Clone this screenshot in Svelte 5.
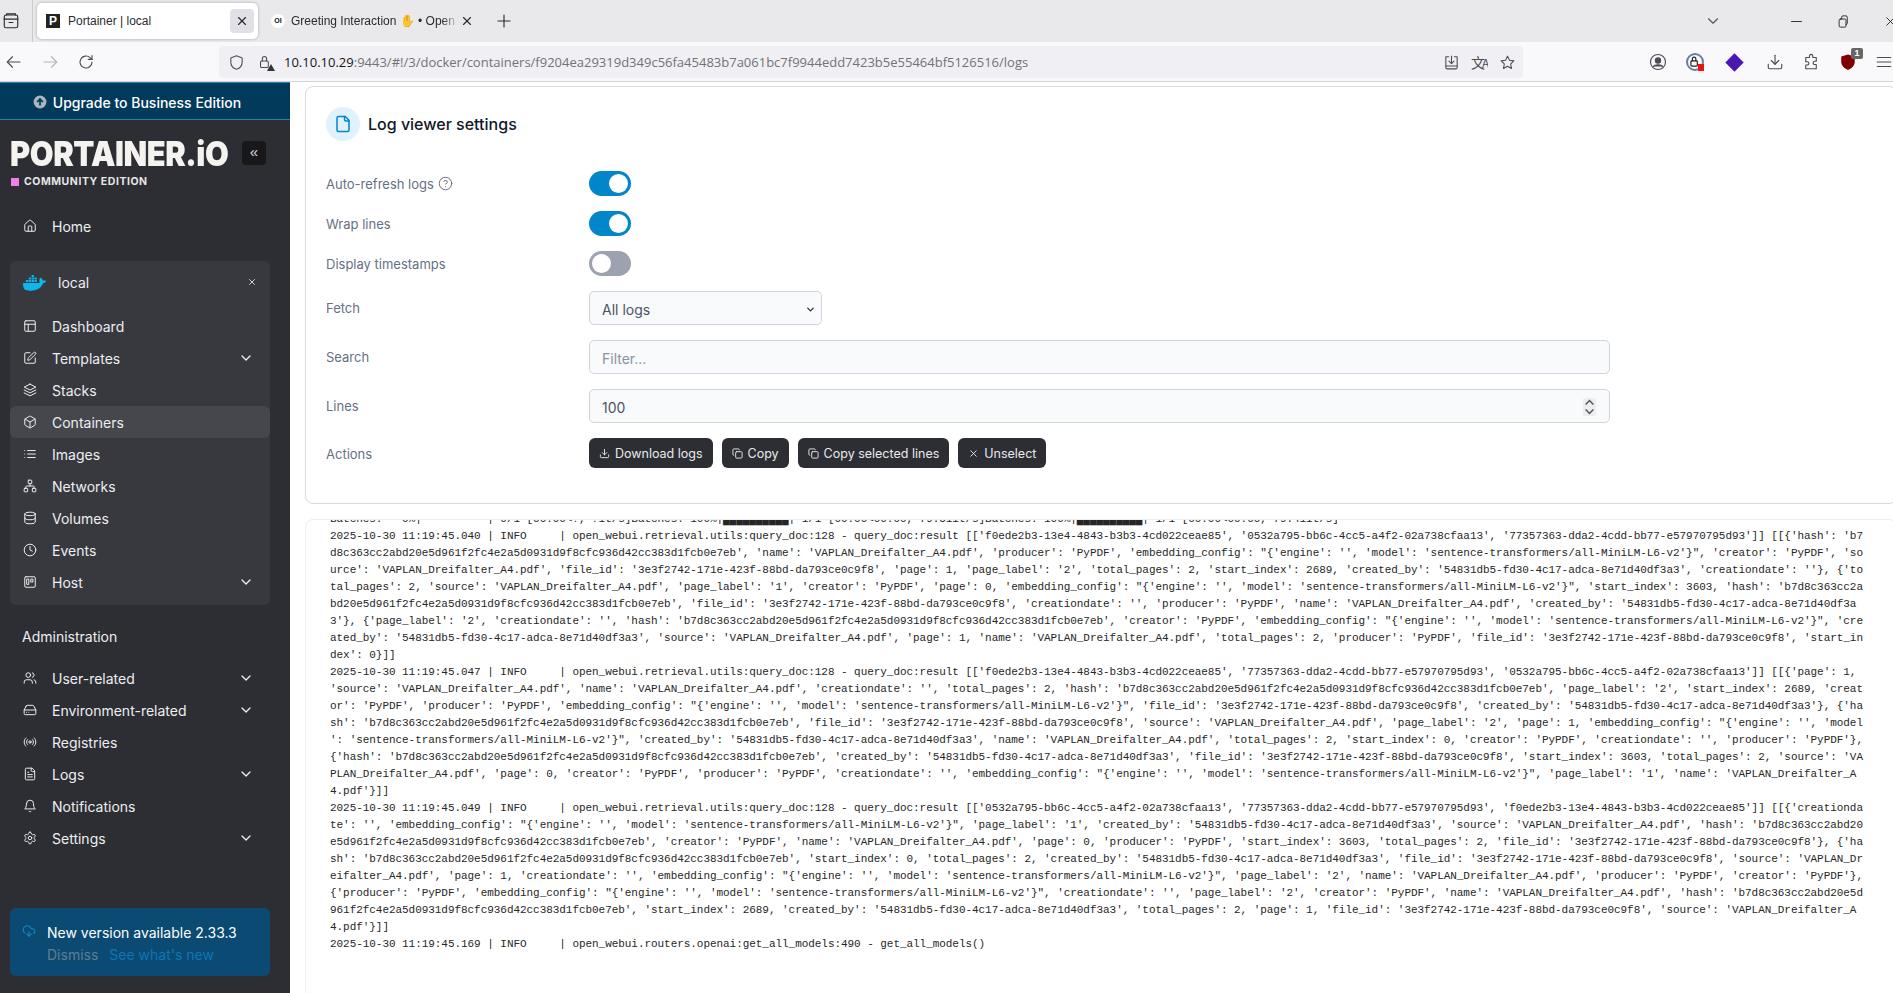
<script>
	const icons = {
		home: '<path d="M15 21v-8a1 1 0 0 0-1-1h-4a1 1 0 0 0-1 1v8"/><path d="M3 10a2 2 0 0 1 .709-1.528l7-5.999a2 2 0 0 1 2.582 0l7 5.999A2 2 0 0 1 21 10v9a2 2 0 0 1-2 2H5a2 2 0 0 1-2-2z"/>',
		layout: '<rect x="3" y="3" width="18" height="18" rx="2"/><path d="M3 9h18"/><path d="M9 21V9"/>',
		edit: '<path d="M12 3H5a2 2 0 0 0-2 2v14a2 2 0 0 0 2 2h14a2 2 0 0 0 2-2v-7"/><path d="M18.375 2.625a1 1 0 0 1 3 3l-9.013 9.014a2 2 0 0 1-.853.505l-2.873.84a.5.5 0 0 1-.62-.62l.84-2.873a2 2 0 0 1 .506-.852z"/>',
		layers: '<path d="M12 2 2 7l10 5 10-5-10-5z"/><path d="m2 17 10 5 10-5"/><path d="m2 12 10 5 10-5"/>',
		box: '<path d="M21 8a2 2 0 0 0-1-1.73l-7-4a2 2 0 0 0-2 0l-7 4A2 2 0 0 0 3 8v8a2 2 0 0 0 1 1.73l7 4a2 2 0 0 0 2 0l7-4A2 2 0 0 0 21 16Z"/><path d="m3.3 7 8.7 5 8.7-5"/><path d="M12 22V12"/>',
		list: '<path d="M8 6h13"/><path d="M8 12h13"/><path d="M8 18h13"/><path d="M3 6h.01"/><path d="M3 12h.01"/><path d="M3 18h.01"/>',
		network: '<rect x="16" y="16" width="6" height="6" rx="1"/><rect x="2" y="16" width="6" height="6" rx="1"/><rect x="9" y="2" width="6" height="6" rx="1"/><path d="M5 16v-3a1 1 0 0 1 1-1h12a1 1 0 0 1 1 1v3"/><path d="M12 12V8"/>',
		database: '<ellipse cx="12" cy="5" rx="9" ry="3"/><path d="M3 5V19A9 3 0 0 0 21 19V5"/><path d="M3 12A9 3 0 0 0 21 12"/>',
		clock: '<circle cx="12" cy="12" r="10"/><path d="M12 6v6l4 2"/>',
		host: '<rect x="3" y="3" width="18" height="18" rx="2"/><rect x="7" y="7" width="3" height="9"/><rect x="14" y="7" width="3" height="5"/>',
		users: '<path d="M16 21v-2a4 4 0 0 0-4-4H6a4 4 0 0 0-4 4v2"/><circle cx="9" cy="7" r="4"/><path d="M22 21v-2a4 4 0 0 0-3-3.87"/><path d="M16 3.13a4 4 0 0 1 0 7.75"/>',
		drive: '<path d="M22 12H2"/><path d="M5.45 5.11 2 12v6a2 2 0 0 0 2 2h16a2 2 0 0 0 2-2v-6l-3.45-6.89A2 2 0 0 0 16.76 4H7.24a2 2 0 0 0-1.79 1.11z"/><path d="M6 16h.01"/><path d="M10 16h.01"/>',
		radio: '<path d="M4.9 19.1C1 15.2 1 8.8 4.9 4.9"/><path d="M7.8 16.2c-2.3-2.3-2.3-6.1 0-8.5"/><circle cx="12" cy="12" r="2"/><path d="M16.2 7.8c2.3 2.3 2.3 6.1 0 8.5"/><path d="M19.1 4.9C23 8.8 23 15.1 19.1 19"/>',
		filetext: '<path d="M15 2H6a2 2 0 0 0-2 2v16a2 2 0 0 0 2 2h12a2 2 0 0 0 2-2V7Z"/><path d="M14 2v4a2 2 0 0 0 2 2h4"/><path d="M10 9H8"/><path d="M16 13H8"/><path d="M16 17H8"/>',
		file: '<path d="M15 2H6a2 2 0 0 0-2 2v16a2 2 0 0 0 2 2h12a2 2 0 0 0 2-2V7Z"/><path d="M14 2v4a2 2 0 0 0 2 2h4"/>',
		bell: '<path d="M6 8a6 6 0 0 1 12 0c0 7 3 9 3 9H3s3-2 3-9"/><path d="M10.3 21a1.94 1.94 0 0 0 3.4 0"/>',
		settings: '<path d="M12.22 2h-.44a2 2 0 0 0-2 2v.18a2 2 0 0 1-1 1.73l-.43.25a2 2 0 0 1-2 0l-.15-.08a2 2 0 0 0-2.73.73l-.22.38a2 2 0 0 0 .73 2.73l.15.1a2 2 0 0 1 1 1.72v.51a2 2 0 0 1-1 1.74l-.15.09a2 2 0 0 0-.73 2.73l.22.38a2 2 0 0 0 2.73.73l.15-.08a2 2 0 0 1 2 0l.43.25a2 2 0 0 1 1 1.73V20a2 2 0 0 0 2 2h.44a2 2 0 0 0 2-2v-.18a2 2 0 0 1 1-1.73l.43-.25a2 2 0 0 1 2 0l.15.08a2 2 0 0 0 2.73-.73l.22-.39a2 2 0 0 0-.73-2.73l-.15-.08a2 2 0 0 1-1-1.74v-.5a2 2 0 0 1 1-1.74l.15-.09a2 2 0 0 0 .73-2.73l-.22-.38a2 2 0 0 0-2.73-.73l-.15.08a2 2 0 0 1-2 0l-.43-.25a2 2 0 0 1-1-1.73V4a2 2 0 0 0-2-2z"/><circle cx="12" cy="12" r="3"/>',
		chevron: '<path d="m6 9 6 6 6-6"/>',
		x: '<path d="M18 6 6 18"/><path d="m6 6 12 12"/>',
		copy: '<rect x="8" y="8" width="14" height="14" rx="2"/><path d="M4 16c-1.1 0-2-.9-2-2V4c0-1.1.9-2 2-2h10c1.1 0 2 .9 2 2"/>',
		download: '<path d="M21 15v4a2 2 0 0 1-2 2H5a2 2 0 0 1-2-2v-4"/><path d="m7 10 5 5 5-5"/><path d="M12 15V3"/>',
		help: '<circle cx="12" cy="12" r="10"/><path d="M9.09 9a3 3 0 0 1 5.83 1c0 2-3 3-3 3"/><path d="M12 17h.01"/>',
		cloud: '<path d="M12 13v8l-4-4"/><path d="m12 21 4-4"/><path d="M4.393 15.269A7 7 0 1 1 15.71 8h1.79a4.5 4.5 0 0 1 2.436 8.284"/>',
		back: '<path d="M20 12H4"/><path d="m10 5-7 7 7 7"/>',
		forward: '<path d="M4 12h16"/><path d="m14 5 7 7-7 7"/>',
		reload: '<path d="M20 12a8 8 0 1 1-2.6-5.9L20 8.5"/><path d="M20 3.5v5h-5"/>',
		shield: '<path d="M12 2.5 4 5.5v6c0 5 3.4 8.5 8 10 4.6-1.5 8-5 8-10v-6z"/>',
		lock: '<rect x="5" y="10" width="11" height="9" rx="1.5"/><path d="M7.5 10V6.5a3 3 0 0 1 6 0V10"/>',
		pocket: '<path d="M4 4h4M16 4h4v15a2 2 0 0 1-2 2H6a2 2 0 0 1-2-2V4"/><path d="M12 3v10"/><path d="m8.5 10 3.5 3.5 3.5-3.5"/><path d="M4 17h16"/>',
		star: '<path d="m12 3 2.8 5.8 6.2.9-4.5 4.4 1.1 6.3L12 17.4l-5.6 3 1.1-6.3L3 9.700l6.200-.9z"/>',
		account: '<circle cx="12" cy="12" r="10"/><circle cx="12" cy="10" r="3.500" fill="currentColor"/><path d="M6 18c1.500-3 10.500-3 12 0" fill="currentColor"/>',
		puzzle: '<path d="M10 4a2.200 2.200 0 0 1 4.400 0v2H19v5h-2a2.200 2.200 0 0 0 0 4.400h2V21H5v-5h2a2.200 2.200 0 0 0 0-4.400H5V6h5z"/>',
		menu: '<path d="M3 6h18"/><path d="M3 12h18"/><path d="M3 18h18"/>',
		tabs: '<rect x="3" y="4" width="18" height="17" rx="2.500"/><path d="M3 9.500h18"/><path d="M6 4V2.500h12V4"/><path d="M9.500 14h5"/>',
		plus: '<path d="M12 4v16"/><path d="M4 12h16"/>',
		restore: '<rect x="5" y="8" width="11" height="13" rx="2"/><path d="M9 8V5a2 2 0 0 1 2-2h5a2 2 0 0 1 2 2v10a2 2 0 0 1-2 2"/>',
		minimize: '<path d="M4 12h16"/>'
	};

	const localNav = [
		{ label: 'Dashboard', icon: 'layout' },
		{ label: 'Templates', icon: 'edit', more: true },
		{ label: 'Stacks', icon: 'layers' },
		{ label: 'Containers', icon: 'box', active: true },
		{ label: 'Images', icon: 'list' },
		{ label: 'Networks', icon: 'network' },
		{ label: 'Volumes', icon: 'database' },
		{ label: 'Events', icon: 'clock' },
		{ label: 'Host', icon: 'host', more: true }
	];

	const adminNav = [
		{ label: 'User-related', icon: 'users', more: true },
		{ label: 'Environment-related', icon: 'drive', more: true },
		{ label: 'Registries', icon: 'radio' },
		{ label: 'Logs', icon: 'filetext', more: true },
		{ label: 'Notifications', icon: 'bell' },
		{ label: 'Settings', icon: 'settings', more: true }
	];

	const block = '██████████';
	const logLines = [
		`Batches:   0%|          | 0/1 [00:00<?, ?it/s]Batches: 100%|${block}| 1/1 [00:00<00:00, 79.51it/s]Batches: 100%|${block}| 1/1 [00:00<00:00, 79.41it/s]`,
		`2025-10-30 11:19:45.040 | INFO     | open_webui.retrieval.utils:query_doc:128 - query_doc:result [['f0ede2b3-13e4-4843-b3b3-4cd022ceae85', '0532a795-bb6c-4cc5-a4f2-02a738cfaa13', '77357363-dda2-4cdd-bb77-e57970795d93']] [[{'hash': 'b7`,
		`d8c363cc2abd20e5d961f2fc4e2a5d0931d9f8cfc936d42cc383d1fcb0e7eb', 'name': 'VAPLAN_Dreifalter_A4.pdf', 'producer': 'PyPDF', 'embedding_config': "{'engine': '', 'model': 'sentence-transformers/all-MiniLM-L6-v2'}", 'creator': 'PyPDF', 'so`,
		`urce': 'VAPLAN_Dreifalter_A4.pdf', 'file_id': '3e3f2742-171e-423f-88bd-da793ce0c9f8', 'page': 1, 'page_label': '2', 'total_pages': 2, 'start_index': 2689, 'created_by': '54831db5-fd30-4c17-adca-8e71d40df3a3', 'creationdate': ''}, {'to`,
		`tal_pages': 2, 'source': 'VAPLAN_Dreifalter_A4.pdf', 'page_label': '1', 'creator': 'PyPDF', 'page': 0, 'embedding_config': "{'engine': '', 'model': 'sentence-transformers/all-MiniLM-L6-v2'}", 'start_index': 3603, 'hash': 'b7d8c363cc2a`,
		`bd20e5d961f2fc4e2a5d0931d9f8cfc936d42cc383d1fcb0e7eb', 'file_id': '3e3f2742-171e-423f-88bd-da793ce0c9f8', 'creationdate': '', 'producer': 'PyPDF', 'name': 'VAPLAN_Dreifalter_A4.pdf', 'created_by': '54831db5-fd30-4c17-adca-8e71d40df3a`,
		`3'}, {'page_label': '2', 'creationdate': '', 'hash': 'b7d8c363cc2abd20e5d961f2fc4e2a5d0931d9f8cfc936d42cc383d1fcb0e7eb', 'creator': 'PyPDF', 'embedding_config': "{'engine': '', 'model': 'sentence-transformers/all-MiniLM-L6-v2'}", 'cre`,
		`ated_by': '54831db5-fd30-4c17-adca-8e71d40df3a3', 'source': 'VAPLAN_Dreifalter_A4.pdf', 'page': 1, 'name': 'VAPLAN_Dreifalter_A4.pdf', 'total_pages': 2, 'producer': 'PyPDF', 'file_id': '3e3f2742-171e-423f-88bd-da793ce0c9f8', 'start_in`,
		`dex': 0}]]`,
		`2025-10-30 11:19:45.047 | INFO     | open_webui.retrieval.utils:query_doc:128 - query_doc:result [['f0ede2b3-13e4-4843-b3b3-4cd022ceae85', '77357363-dda2-4cdd-bb77-e57970795d93', '0532a795-bb6c-4cc5-a4f2-02a738cfaa13']] [[{'page': 1,`,
		`'source': 'VAPLAN_Dreifalter_A4.pdf', 'name': 'VAPLAN_Dreifalter_A4.pdf', 'creationdate': '', 'total_pages': 2, 'hash': 'b7d8c363cc2abd20e5d961f2fc4e2a5d0931d9f8cfc936d42cc383d1fcb0e7eb', 'page_label': '2', 'start_index': 2689, 'creat`,
		`or': 'PyPDF', 'producer': 'PyPDF', 'embedding_config': "{'engine': '', 'model': 'sentence-transformers/all-MiniLM-L6-v2'}", 'file_id': '3e3f2742-171e-423f-88bd-da793ce0c9f8', 'created_by': '54831db5-fd30-4c17-adca-8e71d40df3a3'}, {'ha`,
		`sh': 'b7d8c363cc2abd20e5d961f2fc4e2a5d0931d9f8cfc936d42cc383d1fcb0e7eb', 'file_id': '3e3f2742-171e-423f-88bd-da793ce0c9f8', 'source': 'VAPLAN_Dreifalter_A4.pdf', 'page_label': '2', 'page': 1, 'embedding_config': "{'engine': '', 'model`,
		`': 'sentence-transformers/all-MiniLM-L6-v2'}", 'created_by': '54831db5-fd30-4c17-adca-8e71d40df3a3', 'name': 'VAPLAN_Dreifalter_A4.pdf', 'total_pages': 2, 'start_index': 0, 'creator': 'PyPDF', 'creationdate': '', 'producer': 'PyPDF'},`,
		`{'hash': 'b7d8c363cc2abd20e5d961f2fc4e2a5d0931d9f8cfc936d42cc383d1fcb0e7eb', 'created_by': '54831db5-fd30-4c17-adca-8e71d40df3a3', 'file_id': '3e3f2742-171e-423f-88bd-da793ce0c9f8', 'start_index': 3603, 'total_pages': 2, 'source': 'VA`,
		`PLAN_Dreifalter_A4.pdf', 'page': 0, 'creator': 'PyPDF', 'producer': 'PyPDF', 'creationdate': '', 'embedding_config': "{'engine': '', 'model': 'sentence-transformers/all-MiniLM-L6-v2'}", 'page_label': '1', 'name': 'VAPLAN_Dreifalter_A`,
		`4.pdf'}]]`,
		`2025-10-30 11:19:45.049 | INFO     | open_webui.retrieval.utils:query_doc:128 - query_doc:result [['0532a795-bb6c-4cc5-a4f2-02a738cfaa13', '77357363-dda2-4cdd-bb77-e57970795d93', 'f0ede2b3-13e4-4843-b3b3-4cd022ceae85']] [[{'creationda`,
		`te': '', 'embedding_config': "{'engine': '', 'model': 'sentence-transformers/all-MiniLM-L6-v2'}", 'page_label': '1', 'created_by': '54831db5-fd30-4c17-adca-8e71d40df3a3', 'source': 'VAPLAN_Dreifalter_A4.pdf', 'hash': 'b7d8c363cc2abd20`,
		`e5d961f2fc4e2a5d0931d9f8cfc936d42cc383d1fcb0e7eb', 'creator': 'PyPDF', 'name': 'VAPLAN_Dreifalter_A4.pdf', 'page': 0, 'producer': 'PyPDF', 'start_index': 3603, 'total_pages': 2, 'file_id': '3e3f2742-171e-423f-88bd-da793ce0c9f8'}, {'ha`,
		`sh': 'b7d8c363cc2abd20e5d961f2fc4e2a5d0931d9f8cfc936d42cc383d1fcb0e7eb', 'start_index': 0, 'total_pages': 2, 'created_by': '54831db5-fd30-4c17-adca-8e71d40df3a3', 'file_id': '3e3f2742-171e-423f-88bd-da793ce0c9f8', 'source': 'VAPLAN_Dr`,
		`eifalter_A4.pdf', 'page': 1, 'creationdate': '', 'embedding_config': "{'engine': '', 'model': 'sentence-transformers/all-MiniLM-L6-v2'}", 'page_label': '2', 'name': 'VAPLAN_Dreifalter_A4.pdf', 'producer': 'PyPDF', 'creator': 'PyPDF'},`,
		`{'producer': 'PyPDF', 'embedding_config': "{'engine': '', 'model': 'sentence-transformers/all-MiniLM-L6-v2'}", 'creationdate': '', 'page_label': '2', 'creator': 'PyPDF', 'name': 'VAPLAN_Dreifalter_A4.pdf', 'hash': 'b7d8c363cc2abd20e5d`,
		`961f2fc4e2a5d0931d9f8cfc936d42cc383d1fcb0e7eb', 'start_index': 2689, 'created_by': '54831db5-fd30-4c17-adca-8e71d40df3a3', 'total_pages': 2, 'page': 1, 'file_id': '3e3f2742-171e-423f-88bd-da793ce0c9f8', 'source': 'VAPLAN_Dreifalter_A`,
		`4.pdf'}]]`,
		`2025-10-30 11:19:45.169 | INFO     | open_webui.routers.openai:get_all_models:490 - get_all_models()`
	];
</script>

{#snippet icon(name, cls = '')}
	<svg class="icon {cls}" viewBox="0 0 24 24" fill="none" stroke="currentColor" stroke-width="2" stroke-linecap="round" stroke-linejoin="round" aria-hidden="true">{@html icons[name]}</svg>
{/snippet}

{#snippet navRow(item)}
	<div class="nav-row" class:active={item.active}>
		{@render icon(item.icon, 'nav-icon')}
		<span class="nav-label">{item.label}</span>
		{#if item.more}
			{@render icon('chevron', 'nav-chevron')}
		{/if}
	</div>
{/snippet}

<div class="window">
	<div class="tabstrip">
		<div class="tab-list-btn">{@render icon('tabs', 'chrome-icon')}</div>
		<div class="tab-sep"></div>
		<div class="tab active-tab">
			<span class="favicon">P</span>
			<span class="tab-title">Portainer | local</span>
			<span class="tab-close">{@render icon('x', 'tab-x')}</span>
		</div>
		<div class="tab other-tab">
			<span class="oi">OI</span>
			<span class="tab-title fade">Greeting Interaction ✋ • Open WebUI</span>
			{@render icon('x', 'tab-x')}
		</div>
		<div class="new-tab">{@render icon('plus', 'chrome-icon')}</div>
		<div class="spacer"></div>
		{@render icon('chevron', 'all-tabs')}
		<div class="win-controls">
			{@render icon('minimize', 'win-icon')}
			{@render icon('restore', 'win-icon')}
			{@render icon('x', 'win-icon')}
		</div>
	</div>

	<div class="navbar">
		<div class="nav-buttons">
			{@render icon('back', 'chrome-icon')}
			<span class="dim">{@render icon('forward', 'chrome-icon')}</span>
			{@render icon('reload', 'chrome-icon')}
		</div>
		<div class="urlbar">
			{@render icon('shield', 'url-icon')}
			<span class="lock">
				{@render icon('lock', 'url-icon')}
				<span class="warn"></span>
			</span>
			<span class="url"><b>10.10.10.29</b>:9443/#!/3/docker/containers/f9204ea29319d349c56fa45483b7a061bc7f9944edd7423b5e55464bf5126516/logs</span>
			<span class="spacer"></span>
			<span class="url-actions">
				{@render icon('pocket', 'url-icon')}
				<span class="translate">文<i>A</i></span>
				{@render icon('star', 'url-icon')}
			</span>
		</div>
		<div class="toolbar">
			{@render icon('account', 'chrome-icon')}
			<span class="ext-lock">
				{@render icon('lock', 'ext-lock-icon')}
				<span class="ext-badge"></span>
			</span>
			<span class="diamond"></span>
			{@render icon('download', 'chrome-icon')}
			{@render icon('puzzle', 'chrome-icon')}
			<span class="ublock">
				<svg viewBox="0 0 24 24" class="icon chrome-icon"><path d="M12 2 3 4.500v7c0 5 4 9 9 11 5-2 9-6 9-11v-7z" fill="#800000" /></svg>
				<span class="ublock-count">1</span>
			</span>
			{@render icon('menu', 'chrome-icon')}
		</div>
	</div>

	<div class="page">
		<aside class="sidebar">
			<div class="upgrade">
				<svg class="upgrade-icon" viewBox="0 0 24 24"><circle cx="12" cy="12" r="11" fill="#a9b6c0" /><path d="M12 18V7M7 12l5-5 5 5" fill="none" stroke="#023a5c" stroke-width="3" /></svg>
				Upgrade to Business Edition
			</div>
			<div class="brand">
				<div class="brand-text">
					<div class="logo">PORTAINER.iO</div>
					<div class="edition"><span class="pink"></span>COMMUNITY EDITION</div>
				</div>
				<div class="collapse">«</div>
			</div>

			<div class="nav-group">
				{@render navRow({ label: 'Home', icon: 'home' })}
			</div>

			<div class="env">
				<div class="env-head">
					<svg class="whale" viewBox="0 0 24 17" aria-hidden="true">
						<path fill="#0db7ed" d="M23.700 6.800c-.6-.4-2-.6-3.100-.3-.1-1.100-.8-2-1.900-2.800l-.6-.4-.4.600c-.5.800-.7 2-.6 3 .1.400.2 1 .6 1.500-.4.200-1.100.5-2 .5H.2c-.3 1.300-.3 5.200 2.200 7.400C4 17 6.300 17 8.800 17c5.600 0 10.200-2.500 12.300-7.900 1.400.1 2.500-.7 3-1.800z" />
						<path fill="#0db7ed" d="M3 6h2.400v1.900H3zM6 6h2.400v1.900H6zM9 6h2.400v1.900H9zM12 6h2.400v1.900H12zM6 3.400h2.400v1.900H6zM9 3.400h2.400v1.900H9zM12 3.400h2.400v1.900H12zM9 .8h2.400v1.900H9z" />
					</svg>
					<span class="env-name">local</span>
					{@render icon('x', 'env-close')}
				</div>
				{#each localNav as item (item.label)}
					{@render navRow(item)}
				{/each}
			</div>

			<div class="section-title">Administration</div>
			<div class="nav-group">
				{#each adminNav as item (item.label)}
					{@render navRow(item)}
				{/each}
			</div>

			<div class="update">
				{@render icon('cloud', 'update-icon')}
				<div>
					<div class="update-title">New version available 2.33.3</div>
					<div class="update-links"><span class="dismiss">Dismiss</span><span class="whats-new">See what's new</span></div>
				</div>
			</div>
		</aside>

		<main class="main">
			<section class="card settings">
				<header class="card-head">
					<span class="head-icon">{@render icon('file', 'head-svg')}</span>
					<h2>Log viewer settings</h2>
				</header>

				<div class="form">
					<div class="label">Auto-refresh logs {@render icon('help', 'help-icon')}</div>
					<div class="toggle on"><span></span></div>

					<div class="label">Wrap lines</div>
					<div class="toggle on"><span></span></div>

					<div class="label">Display timestamps</div>
					<div class="toggle"><span></span></div>

					<div class="label">Fetch</div>
					<div class="control select">All logs {@render icon('chevron', 'select-chevron')}</div>

					<div class="label">Search</div>
					<div class="control placeholder">Filter...</div>

					<div class="label">Lines</div>
					<div class="control number">
						100
						<span class="spinner">
							<svg viewBox="0 0 10 14"><path d="M2 5l3-3 3 3M2 9l3 3 3-3" fill="none" stroke="#555" stroke-width="1.200" /></svg>
						</span>
					</div>

					<div class="label actions-label">Actions</div>
					<div class="actions">
						<button class="btn">{@render icon('download', 'btn-icon')}Download logs</button>
						<button class="btn">{@render icon('copy', 'btn-icon')}Copy</button>
						<button class="btn">{@render icon('copy', 'btn-icon')}Copy selected lines</button>
						<button class="btn">{@render icon('x', 'btn-icon')}Unselect</button>
					</div>
				</div>
			</section>

			<section class="card log">
				<div class="log-scroll">
					{#each logLines as line, i (i)}
						<div class="log-line">{line}</div>
					{/each}
				</div>
			</section>
		</main>
	</div>
</div>

<style>
	:global(body) {
		margin: 0;
		overflow: hidden;
		background: #fff;
	}

	.window {
		width: 1893px;
		height: 993px;
		display: flex;
		flex-direction: column;
		overflow: hidden;
		font-family: Inter, 'Noto Sans', sans-serif;
	}

	.icon {
		display: block;
		flex: none;
		width: 16px;
		height: 16px;
	}

	.spacer {
		flex: 1;
	}

	/* browser chrome */
	.tabstrip {
		height: 42px;
		display: flex;
		align-items: center;
		background: #e9e9ec;
		color: #2b2a33;
		font-family: 'Liberation Sans', sans-serif;
		font-size: 12px;
		flex: none;
	}

	.tab-list-btn {
		width: 32px;
		padding-left: 2px;
		box-sizing: border-box;
	}

	.tab-sep {
		width: 1px;
		height: 42px;
		background: #c9c9ce;
	}

	.tab {
		height: 36px;
		display: flex;
		align-items: center;
		box-sizing: border-box;
		white-space: nowrap;
	}

	.active-tab {
		width: 221px;
		margin-left: 4px;
		padding: 0 4px 0 9px;
		background: #fff;
		border-radius: 5px;
		box-shadow: 0 0 3px rgba(0, 0, 0, 0.3);
	}

	.favicon {
		width: 14px;
		height: 14px;
		background: #222;
		color: #fff;
		font: 700 12px 'Liberation Sans', sans-serif;
		line-height: 14px;
		text-align: center;
		margin-right: 8px;
	}

	.tab-title {
		flex: 1;
		overflow: hidden;
	}

	.tab-close {
		width: 24px;
		height: 24px;
		background: #e0e0e6;
		border-radius: 4px;
		display: flex;
		align-items: center;
		justify-content: center;
	}

	:global(.tab-x) {
		width: 14px !important;
		height: 14px !important;
	}

	.other-tab {
		width: 232px;
		padding: 0 16px 0 13px;
	}

	.oi {
		width: 14px;
		height: 14px;
		border-radius: 50%;
		background: #fff;
		color: #111;
		font: 700 7px/14px 'Liberation Sans', sans-serif;
		text-align: center;
		margin-right: 6px;
	}

	.fade {
		mask-image: linear-gradient(to right, #000 90%, transparent);
		margin-right: 1px;
	}

	.new-tab {
		margin-left: 5px;
	}

	:global(.chrome-icon) {
		width: 18px !important;
		height: 18px !important;
		stroke-width: 1.500;
	}

	:global(.all-tabs) {
		width: 18px !important;
		height: 18px !important;
		stroke-width: 1.500;
		color: #555;
		margin-right: 67px;
	}

	.win-controls {
		display: flex;
		gap: 32px;
		margin-right: -5px;
	}

	:global(.win-icon) {
		width: 15px !important;
		height: 15px !important;
		stroke-width: 1.500;
	}

	.navbar {
		height: 38px;
		padding-top: 1px;
		flex: none;
		display: flex;
		align-items: center;
		background: #f9f9fb;
		border-bottom: 1px solid #d4d4d8;
		color: #4c4b55;
	}

	.nav-buttons {
		width: 219px;
		flex: none;
		padding-left: 5px;
		box-sizing: border-box;
		display: flex;
		gap: 18px;
	}

	.dim {
		opacity: 0.4;
	}

	.urlbar {
		width: 1304px;
		flex: none;
		height: 32px;
		display: flex;
		align-items: center;
		background: #f0f0f4;
		border-radius: 4px;
		padding-left: 9px;
		box-sizing: border-box;
	}

	:global(.url-icon) {
		width: 17px !important;
		height: 17px !important;
		stroke-width: 1.500;
	}

	.lock {
		position: relative;
		margin-left: 12px;
	}

	.warn {
		position: absolute;
		right: -1px;
		bottom: 0;
		width: 0;
		height: 0;
		border-left: 4px solid transparent;
		border-right: 4px solid transparent;
		border-bottom: 7px solid #333;
	}

	.url {
		margin-left: 10px;
		font-family: 'Open Sans', sans-serif;
		font-size: 13px;
		color: #737278;
		white-space: nowrap;
	}

	.url b {
		font-weight: 400;
		color: #15141a;
	}

	.url-actions {
		display: flex;
		align-items: center;
		gap: 11px;
		padding-right: 7px;
	}

	.translate {
		width: 17px;
		font: 14px 'Noto Sans CJK SC', sans-serif;
		letter-spacing: -3px;
		white-space: nowrap;
		overflow: hidden;
	}

	.translate i {
		font-style: normal;
		font-size: 12px;
	}

	.toolbar {
		flex: none;
		display: flex;
		align-items: center;
		gap: 18.5px;
		padding-left: 126px;
	}

	.ext-lock {
		position: relative;
		width: 18px;
		height: 18px;
		border: 2px solid #6b7fa0;
		border-radius: 50%;
		box-sizing: border-box;
		color: #222;
	}

	:global(.ext-lock-icon) {
		width: 14px !important;
		height: 14px !important;
	}

	.ext-badge {
		position: absolute;
		right: -2px;
		bottom: -2px;
		width: 6px;
		height: 7px;
		background: #e11;
	}

	.diamond {
		width: 13px;
		height: 13px;
		background: #4a18b0;
		transform: rotate(45deg);
		margin: 0 6px;
	}

	.ublock {
		position: relative;
	}

	.ublock-count {
		position: absolute;
		top: -5px;
		right: -6px;
		background: #666;
		color: #fff;
		font: 700 9px/11px 'Liberation Sans', sans-serif;
		padding: 0 3px;
		border-radius: 2px;
	}

	/* page */
	.page {
		flex: 1;
		min-height: 0;
		display: flex;
	}

	.sidebar {
		width: 290px;
		flex: none;
		display: flex;
		flex-direction: column;
		background: #2d2e33;
		color: #eceef1;
		font-size: 14px;
	}

	.upgrade {
		height: 38px;
		box-sizing: border-box;
		display: flex;
		align-items: center;
		justify-content: center;
		gap: 6px;
		padding: 2px 16px 0 0;
		background: #023a5c;
		border-top: 1px solid #2a7fa8;
		border-bottom: 1px solid #2a7fa8;
		color: #fff;
		font-weight: 500;
	}

	.upgrade-icon {
		width: 14px;
		height: 14px;
	}

	.brand {
		height: 90px;
		padding: 21px 24px 0 10px;
		box-sizing: border-box;
		display: flex;
		justify-content: space-between;
	}

	.logo {
		width: 220px;
		height: 26px;
		font: 900 34px/26px Inter, sans-serif;
		color: #f5f3f0;
		white-space: nowrap;
		transform: scaleX(0.905);
		transform-origin: left center;
		letter-spacing: -0.5px;
	}

	.edition {
		display: flex;
		align-items: center;
		margin: 8px 0 0 1px;
		font-size: 10.5px;
		font-weight: 700;
		letter-spacing: 0.55px;
		color: #e6e6e6;
	}

	.pink {
		width: 8px;
		height: 8px;
		background: #f17ee8;
		margin-right: 5px;
	}

	.collapse {
		width: 24px;
		height: 24px;
		background: #18181b;
		border-radius: 4px;
		text-align: center;
		font: 15px/21px 'Liberation Sans', sans-serif;
		color: #d8d8d8;
	}

	.nav-group {
		padding: 0 20px 0 10px;
	}

	.nav-row {
		height: 32px;
		display: flex;
		align-items: center;
		padding: 0 16px 0 13px;
		border-radius: 6px;
	}

	.nav-row.active {
		background: #46474d;
	}

	:global(.nav-icon) {
		width: 14px !important;
		height: 14px !important;
		margin-right: 15px;
		stroke-width: 1.700;
	}

	.nav-label {
		flex: 1;
	}

	:global(.nav-chevron) {
		width: 16px !important;
		height: 16px !important;
	}

	.env {
		margin: 19px 20px 0 10px;
		background: #38393e;
		border-radius: 6px;
		height: 344px;
		box-sizing: border-box;
	}

	.env-head {
		height: 49px;
		padding: 0 13px 7px;
		box-sizing: border-box;
		display: flex;
		align-items: center;
	}

	.whale {
		width: 23px;
		height: 17px;
		margin-right: 12px;
	}

	.env-name {
		flex: 1;
	}

	:global(.env-close) {
		width: 10px !important;
		height: 10px !important;
	}

	.section-title {
		margin: 23px 0 0 22px;
		height: 34px;
	}

	.update {
		margin: auto 20px 17px 10px;
		height: 68px;
		box-sizing: border-box;
		padding: 16px 12px;
		display: flex;
		gap: 11px;
		background: #0a4a73;
		border-radius: 6px;
		color: #fff;
	}

	:global(.update-icon) {
		width: 14px !important;
		height: 14px !important;
		color: #1b86c4;
		stroke-width: 1.800;
	}

	.update-title {
		line-height: 18px;
	}

	.update-links {
		margin-top: 5px;
		display: flex;
		gap: 11px;
		line-height: 16px;
	}

	.dismiss {
		color: #5f7d93;
	}

	.whats-new {
		color: #0f76b4;
	}

	/* main */
	.main {
		flex: 1;
		min-width: 0;
		display: flex;
		flex-direction: column;
		gap: 15px;
		padding: 4px 0 0 15px;
		margin-right: -4px;
		background: #fff;
	}

	.card {
		border: 1px solid #d8dadf;
		border-radius: 8px;
		background: #fff;
	}

	.settings {
		height: 418px;
		box-sizing: border-box;
		padding: 20px;
		flex: none;
	}

	.card-head {
		display: flex;
		align-items: center;
		gap: 8px;
		height: 34px;
		margin-bottom: 30px;
	}

	.head-icon {
		width: 34px;
		height: 34px;
		border-radius: 50%;
		background: #e0f2fe;
		display: flex;
		align-items: center;
		justify-content: center;
		color: #0086c9;
	}

	.card-head h2 {
		margin: 0;
		font-size: 16px;
		font-weight: 500;
		color: #101828;
	}

	:global(.head-svg) {
		width: 18px !important;
		height: 18px !important;
	}

	.form {
		display: grid;
		grid-template-columns: 263px 1021px;
		row-gap: 15px;
		align-items: center;
		font-size: 13px;
	}

	.label {
		display: flex;
		align-items: center;
		gap: 4px;
		color: #667085;
	}

	.actions-label {
		padding-top: 2px;
	}

	:global(.help-icon) {
		width: 15px !important;
		height: 15px !important;
		stroke-width: 1.500;
		color: #5f6673;
	}

	.toggle {
		width: 42px;
		height: 25px;
		padding: 3px;
		box-sizing: border-box;
		border-radius: 13px;
		background: #9ca3af;
		display: flex;
	}

	.toggle.on {
		background: #0086c9;
		justify-content: flex-end;
	}

	.toggle span {
		width: 19px;
		height: 19px;
		border-radius: 50%;
		background: #fff;
	}

	.control {
		height: 34px;
		box-sizing: border-box;
		padding: 2px 12px 0;
		display: flex;
		align-items: center;
		justify-content: space-between;
		background: #f9fafb;
		border: 1px solid #d0d5dd;
		border-radius: 5px;
		color: #4b5563;
		font-size: 14px;
	}

	.select {
		width: 233px;
	}

	:global(.select-chevron) {
		width: 11px !important;
		height: 11px !important;
		margin-right: -7px;
		stroke-width: 3;
		color: #333;
	}

	.placeholder {
		color: #8b92a0;
	}

	.spinner svg {
		display: block;
		width: 13px;
		height: 18px;
		background: #eceef1;
		border-radius: 2px;
	}

	.number {
		padding-right: 13px;
	}

	.actions {
		display: flex;
		gap: 9px;
	}

	.btn {
		height: 30px;
		padding: 0 10px;
		display: flex;
		align-items: center;
		gap: 5px;
		border: 0;
		border-radius: 6px;
		background: #2d2e33;
		color: #e8e9eb;
		font-family: inherit;
		font-size: 12.5px;
	}

	:global(.btn-icon) {
		width: 11px !important;
		height: 11px !important;
	}

	.log {
		flex: 1;
		min-height: 0;
		overflow: hidden;
		margin-bottom: -10px;
		border-color: #eceef0;
	}

	.log-scroll {
		margin-top: -9px;
		padding-left: 24px;
	}

	.log-line {
		height: 17px;
		font: 11px/17px 'Liberation Mono', monospace;
		letter-spacing: -0.05px;
		color: #262626;
		white-space: pre;
	}
</style>
